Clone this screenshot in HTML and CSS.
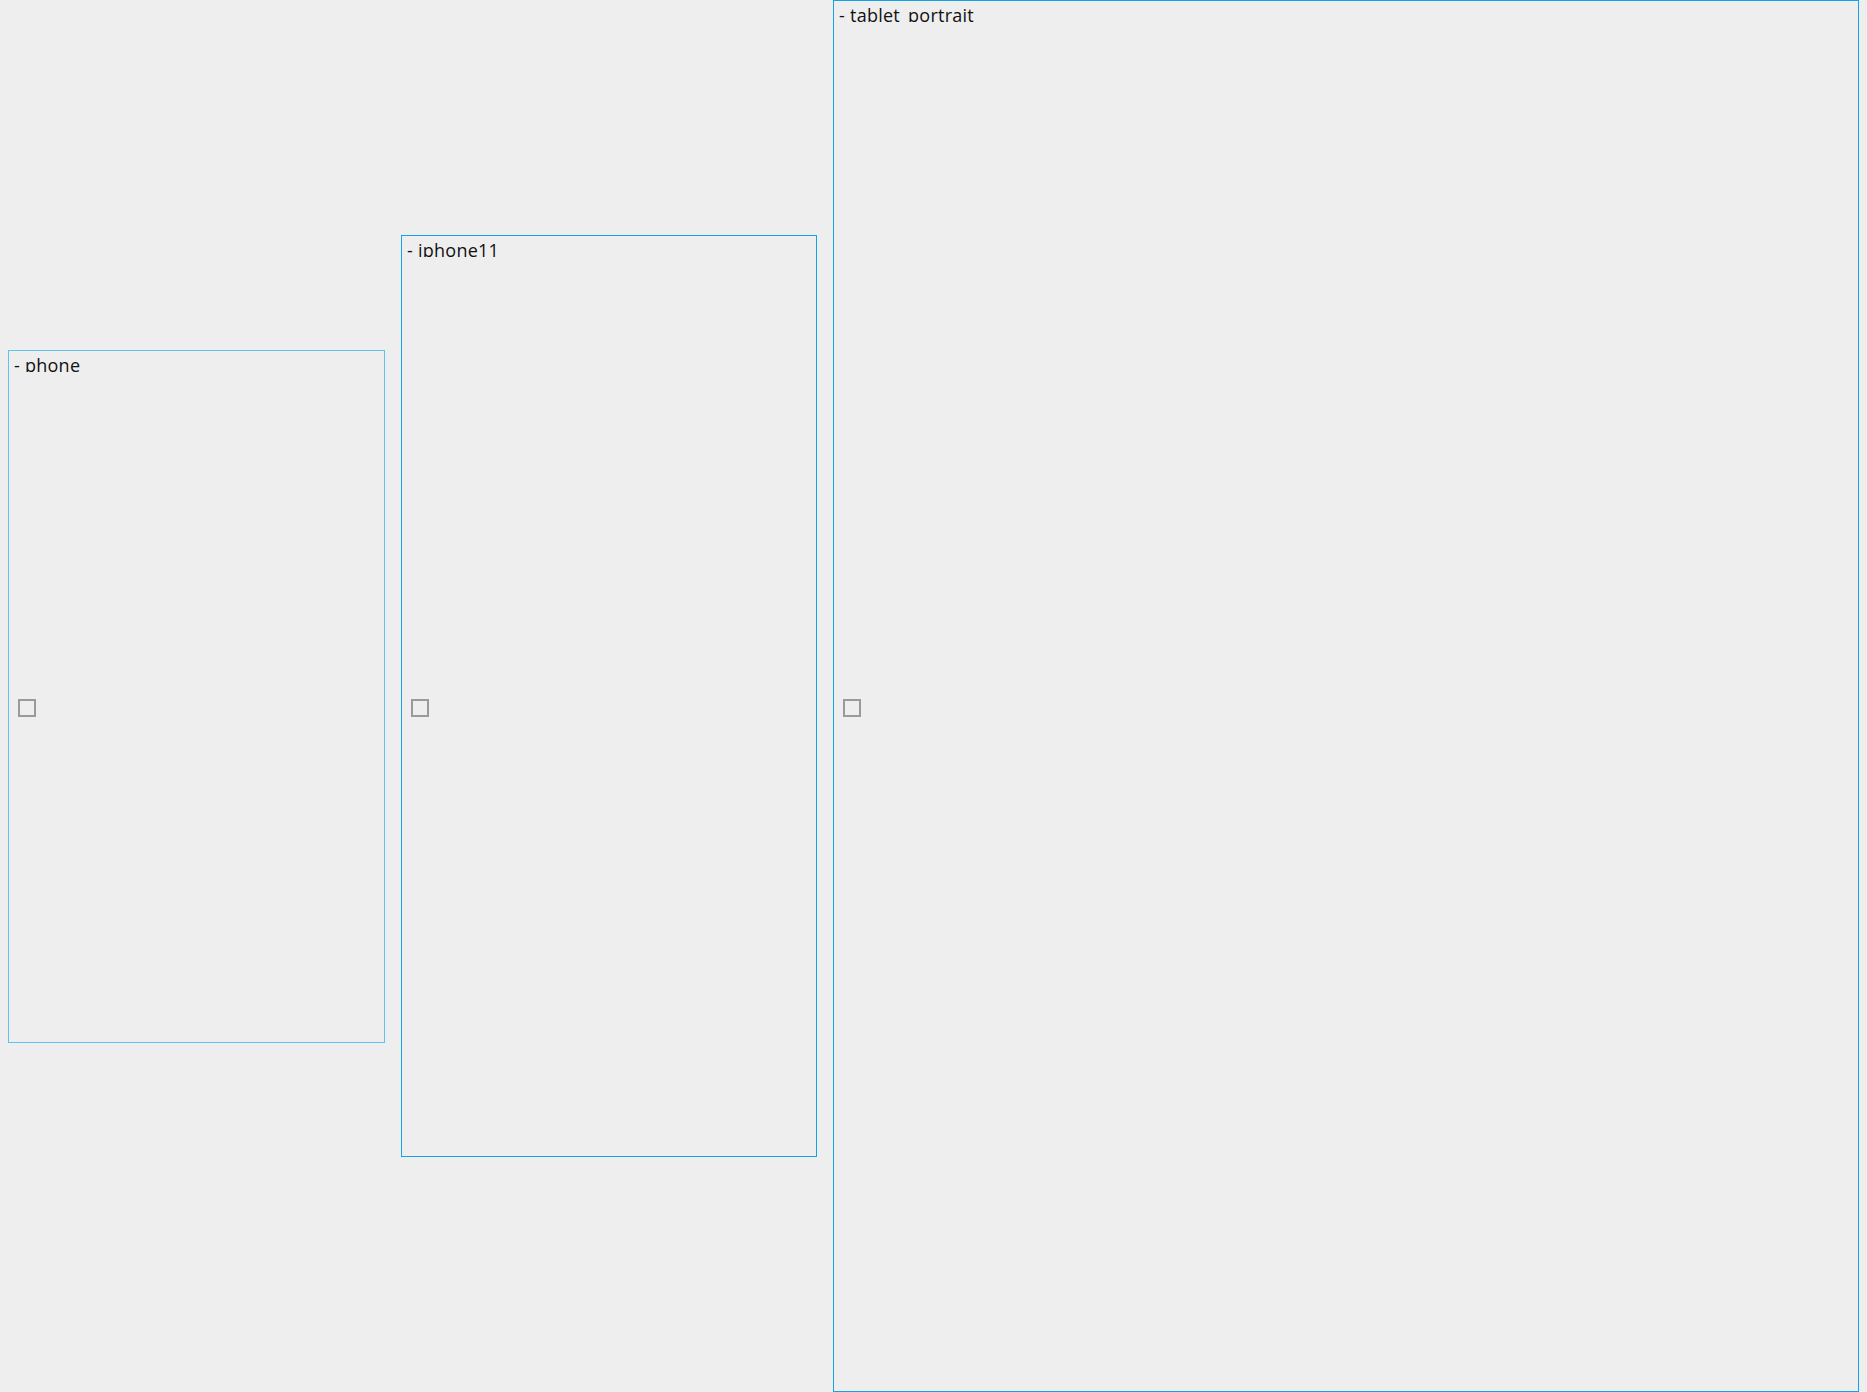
FILE: index.html
```html
<!DOCTYPE html>
<html>
<head>
<meta charset="utf-8">
<link rel="stylesheet" href="styles.css">
</head>
<body>
<div class="stage">
  <div class="frame frame-phone">
    <div class="label"><div class="label-text">- phone</div></div>
    <div class="screen screen-phone"><span class="check"></span></div>
  </div>
  <div class="frame">
    <div class="label"><div class="label-text">- iphone11</div></div>
    <div class="screen screen-iphone11"><span class="check"></span></div>
  </div>
  <div class="frame">
    <div class="label"><div class="label-text">- tablet_portrait</div></div>
    <div class="screen screen-tablet"><span class="check"></span></div>
  </div>
</div>
</body>
</html>
```

FILE: styles.css
```css
html, body {
  margin: 0;
  padding: 0;
  background: #eeeeee;
}
body {
  font-family: "Open Sans", "Noto Sans", sans-serif;
  color: #111;
}
.stage {
  display: flex;
  align-items: center;
  gap: 16px;
  padding: 0 8px;
  height: 1392px;
  box-sizing: border-box;
}
.frame {
  border: 1px solid #10a3e8;
  display: flex;
  flex-direction: column;
  flex: none;
}
.frame-phone {
  border-color: #5ec3f0;
}
.label {
  height: 24px;
  padding: 4px 5px 0;
  box-sizing: border-box;
}
.label-text {
  font-size: 18px;
  letter-spacing: 0.25px;
  line-height: 20px;
  height: 17px;
  overflow: hidden;
  white-space: nowrap;
}
.screen {
  display: flex;
  align-items: center;
}
.screen-phone { width: 375px; height: 667px; }
.screen-iphone11 { width: 414px; height: 896px; }
.screen-tablet { width: 1024px; height: 1366px; }
.check {
  width: 18px;
  height: 18px;
  box-sizing: border-box;
  border: 2px solid #9a9a9a;
  margin-left: 9px;
}
```
